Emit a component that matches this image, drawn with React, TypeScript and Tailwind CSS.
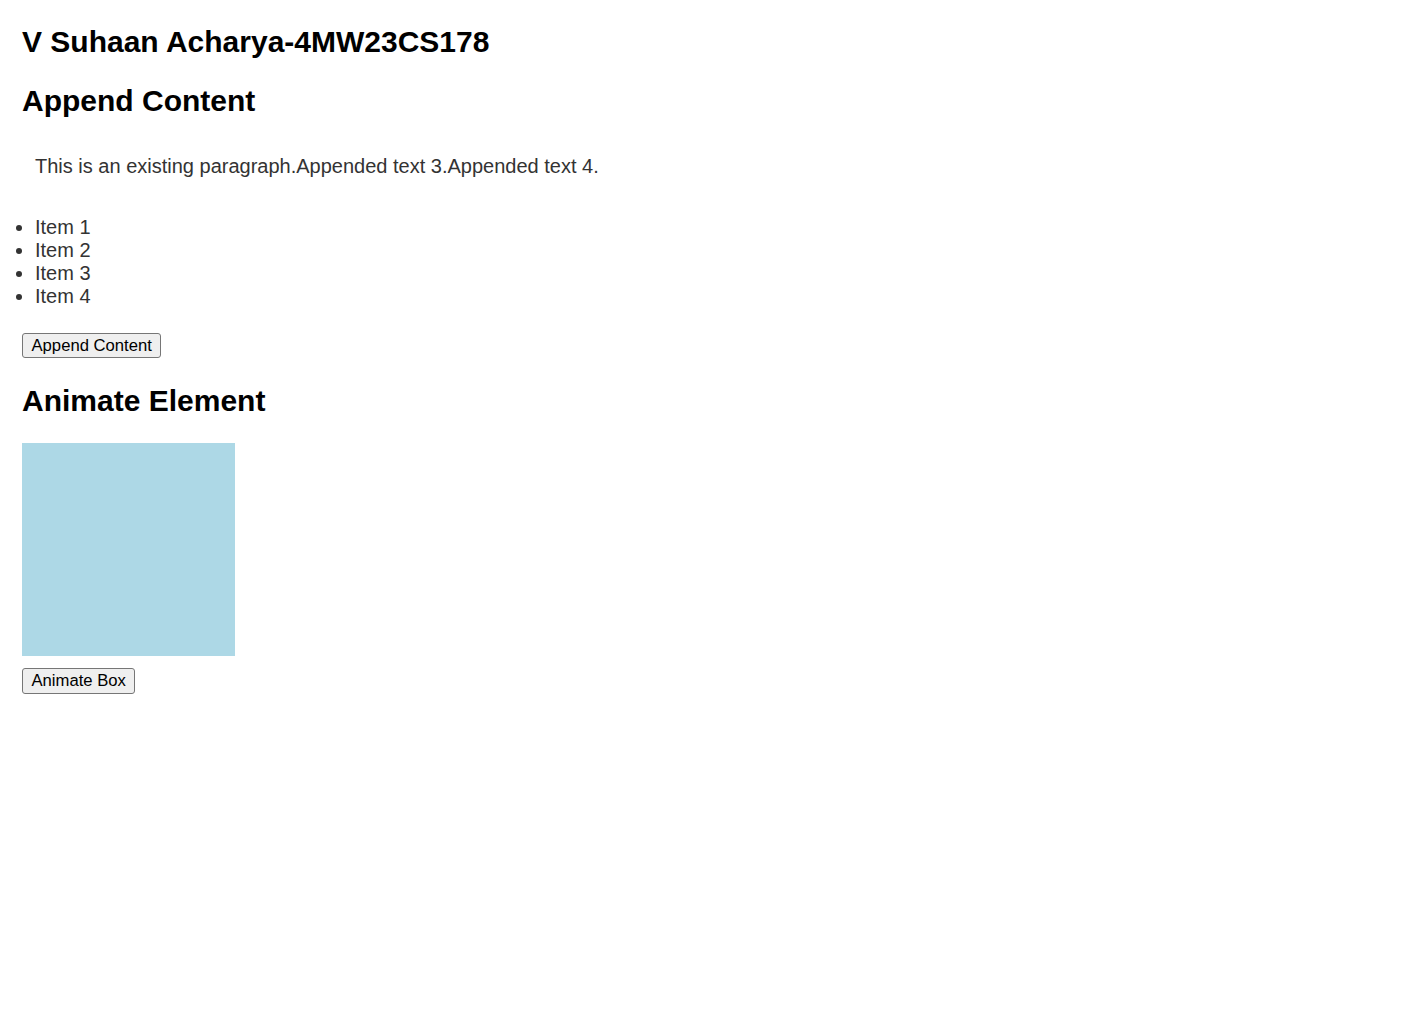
import React from "react";

export default function App() {
  const font = { fontFamily: '"Liberation Sans", Arial, sans-serif' };
  return (
    <div className="min-h-screen bg-white pt-[25px]" style={font}>
      <h1 className="ml-[22px] text-[30px] leading-[34px] font-bold text-black">V Suhaan Acharya-4MW23CS178</h1>
      <h2 className="ml-[22px] mt-[25px] text-[30px] leading-[34px] font-bold text-black">Append Content</h2>
      <p className="ml-[35px] mt-[37px] text-[20px] leading-[23px] text-[#333]">
        This is an existing paragraph.Appended text 3.Appended text 4.
      </p>
      <ul className="mt-[38px] pl-[35px] list-disc text-[20px] leading-[23px] text-[#333]">
        <li>Item 1</li>
        <li>Item 2</li>
        <li>Item 3</li>
        <li>Item 4</li>
      </ul>
      <button className="ml-[22px] mt-[25px] h-[25px] px-[8.5px] border border-[#767676] rounded-[3px] bg-[#efefef] text-[16.67px] leading-[20px] text-black">
        Append Content
      </button>
      <h2 className="ml-[22px] mt-[26px] text-[30px] leading-[34px] font-bold text-black">Animate Element</h2>
      <div className="ml-[22px] mt-[25px] w-[213px] h-[213px] bg-[#add8e6]" />
      <button className="block ml-[22px] mt-[12px] h-[26px] px-[8.5px] border border-[#767676] rounded-[3px] bg-[#efefef] text-[16.67px] leading-[20px] text-black">
        Animate Box
      </button>
    </div>
  );
}
